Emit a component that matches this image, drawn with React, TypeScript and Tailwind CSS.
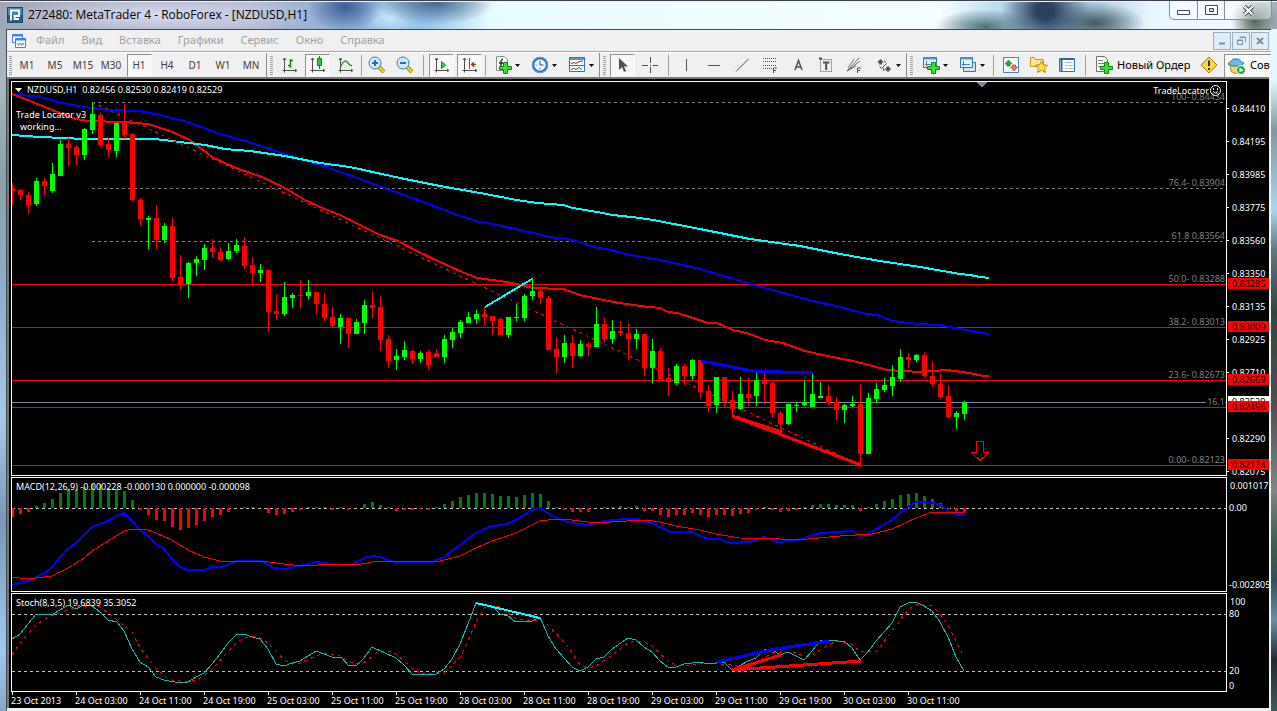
import type { ReactNode } from 'react';
import clsx from 'clsx';

type Candle = [number, number, number, number, number];

// [up, high, body top, body bottom, low]
const candles: Candle[] = [
  [0, 183, 188, 191, 205], [0, 189, 190, 195, 200], [0, 192, 195, 205, 214], [1, 178, 181, 204, 206],
  [0, 178, 181, 186, 195], [1, 163, 174, 191, 193], [1, 140, 144, 176, 176], [0, 138, 144, 148, 166],
  [0, 145, 147, 155, 165], [1, 128, 129, 155, 160], [1, 102, 114, 130, 134], [0, 113, 115, 145, 147],
  [0, 138, 144, 150, 157], [1, 123, 123, 151, 157], [0, 104, 123, 135, 139], [0, 133, 134, 200, 202],
  [0, 198, 200, 219, 226], [1, 216, 218, 220, 249], [0, 205, 218, 240, 249], [1, 223, 226, 240, 243],
  [0, 217, 226, 278, 282], [0, 255, 277, 284, 290], [1, 262, 263, 284, 298], [1, 256, 259, 263, 276],
  [1, 244, 248, 260, 270], [0, 239, 248, 252, 258], [0, 247, 252, 260, 261], [1, 243, 251, 259, 260],
  [1, 239, 245, 251, 253], [0, 237, 246, 266, 269], [0, 257, 265, 273, 284], [1, 264, 270, 273, 282],
  [0, 270, 270, 312, 332], [0, 294, 311, 314, 320], [1, 282, 297, 314, 316], [1, 293, 295, 298, 308],
  [0, 280, 295, 296, 308], [1, 280, 292, 296, 299], [0, 292, 292, 304, 314], [0, 293, 304, 318, 321],
  [0, 307, 317, 326, 327], [1, 314, 318, 327, 344], [0, 318, 318, 334, 348], [1, 319, 322, 334, 334],
  [1, 300, 305, 323, 334], [0, 292, 305, 308, 318], [0, 296, 307, 340, 351], [0, 335, 339, 361, 368],
  [1, 349, 356, 360, 370], [1, 341, 350, 357, 360], [0, 350, 351, 359, 364], [1, 351, 353, 359, 363],
  [0, 350, 352, 365, 370], [0, 349, 353, 357, 357], [1, 335, 339, 357, 363], [1, 328, 332, 340, 348],
  [1, 320, 322, 333, 338], [1, 312, 317, 323, 323], [1, 310, 314, 319, 324], [0, 307, 314, 317, 325],
  [0, 316, 316, 321, 335], [0, 317, 319, 335, 335], [1, 317, 317, 335, 338], [1, 304, 317, 318, 321],
  [1, 294, 296, 318, 321], [1, 278, 291, 296, 300], [0, 288, 291, 298, 304], [0, 296, 298, 350, 350],
  [0, 337, 349, 357, 373], [1, 335, 343, 357, 363], [0, 335, 343, 356, 368], [1, 340, 344, 356, 357],
  [0, 342, 344, 347, 356], [1, 307, 324, 347, 347], [0, 318, 324, 339, 342], [1, 320, 331, 339, 344],
  [0, 321, 331, 333, 336], [0, 323, 333, 339, 360], [1, 329, 334, 339, 349], [0, 334, 334, 368, 376],
  [1, 339, 351, 368, 383], [0, 348, 351, 379, 379], [0, 368, 378, 382, 396], [1, 364, 366, 383, 385],
  [0, 364, 366, 376, 385], [1, 359, 360, 376, 380], [0, 360, 360, 392, 398], [0, 385, 391, 406, 412],
  [1, 377, 377, 405, 413], [0, 377, 377, 401, 407], [0, 391, 400, 409, 415], [1, 377, 394, 409, 410],
  [0, 378, 394, 398, 406], [1, 371, 380, 396, 406], [0, 373, 380, 384, 404], [0, 380, 383, 413, 418],
  [0, 411, 413, 424, 431], [1, 404, 404, 424, 425], [1, 402, 405, 406, 412], [1, 380, 402, 405, 406],
  [1, 372, 394, 407, 407], [1, 382, 396, 398, 398], [0, 385, 396, 403, 405], [0, 397, 402, 410, 420],
  [1, 404, 405, 410, 423], [1, 396, 404, 406, 407], [0, 384, 404, 454, 467], [1, 393, 398, 454, 454],
  [1, 383, 389, 399, 403], [1, 378, 385, 390, 392], [1, 365, 377, 386, 396], [1, 349, 357, 379, 382],
  [0, 353, 357, 360, 368], [1, 354, 355, 360, 362], [0, 352, 355, 376, 378], [0, 361, 376, 384, 387],
  [0, 373, 384, 397, 398], [0, 385, 396, 417, 418], [1, 411, 413, 417, 429], [1, 401, 402, 414, 420],
];

const histogram = [
  -9, -6, -4, 2, 5, 9, 15, 19, 19, 21, 24, 24, 20, 19, 17, 8, -2, -7, -12, -13, -19, -22, -20, -17, -13, -9, -7, -4, 0, 1,
  1, 0, -5, -7, -6, -4, -2, 1, 1, 1, -2, 1, -2, 0, 4, 6, 3, 1, -3, -2, -2, -1, -2, 1, 4, 7, 11, 13, 15, 15,
  14, 12, 12, 11, 13, 15, 14, 7, 1, -2, -4, -4, -4, 0, 1, 1, 2, 1, 2, -3, -3, -7, -9, -7, -7, -5, -7, -9, -7, -7,
  -8, -6, -5, -2, 1, -2, -4, -3, -2, 1, 3, 4, 4, 3, 3, 3, -3, 1, 4, 7, 9, 13, 14, 15, 12, 9, 5, -1, -3, -4,
];

const maSlow =
  '12,135 40,137 64,138 84,139 155,139 172,141 205,145 225,149 250,151 285,156 320,163 350,167 400,178 440,186 480,193 517,200 537,203 563,205 573,208 597,212 613,215 640,218 653,220 700,229 750,239 800,246 840,254 880,261 920,267 960,274 970,275 980,277 989,278';
const maMedium =
  '12,94 40,97 62,103 84,107 108,110 140,111 160,115 188,122 220,134 252,143 285,154 320,165 352,176 384,188 418,200 460,216 480,222 493,224 533,233 550,237 567,239 580,242 597,248 607,249 630,255 660,260 700,269 740,281 780,292 809,300 840,307 867,314 877,315 893,321 917,324 940,325 960,329 989,334';
const maFast =
  '12,94 30,101 52,110 76,119 88,121 124,122 148,124 170,131 190,140 212,157 236,168 262,177 285,188 305,200 320,207 340,215 380,235 398,241 417,251 440,262 462,272 477,278 500,281 517,284 533,288 563,289 580,295 613,302 640,306 660,308 668,312 677,313 687,316 708,323 717,323 733,330 750,334 765,340 783,343 805,351 827,356 853,361 873,366 887,370 920,372 947,370 970,373 983,376 989,376';
const macdMain =
  '12,585 20,583 28,581 36,577 46,572 53,566 60,557 68,549 76,543 84,535 92,527 100,524 108,521 116,516 124,513 132,521 140,530 148,536 156,544 164,549 172,559 180,567 188,570 204,570 212,567 222,567 236,561 262,561 274,568 284,569 300,566 316,562 332,564 350,565 356,562 364,558 372,556 380,557 388,560 395,562 432,562 444,557 460,545 476,533 484,529 492,526 504,525 516,520 532,510 540,508 548,513 556,518 572,523 588,525 604,521 625,519 638,519 645,522 652,523 660,527 668,531 672,532 692,532 708,539 720,539 730,543 750,542 764,537 778,542 798,540 820,533 852,531 860,536 868,534 876,529 892,520 900,513 908,507 916,502 934,503 942,506 948,511 956,515 965,515';
const macdSignal =
  '12,577 28,579 52,576 68,568 84,558 92,551 108,541 124,531 132,529 148,530 156,533 172,540 188,550 204,557 220,561 236,562 262,561 284,564 304,566 332,564 356,565 372,562 380,561 440,561 460,556 476,548 492,541 516,533 540,521 556,519 572,520 588,522 610,522 645,520 660,522 676,526 700,530 716,534 740,538 780,539 808,539 840,536 872,534 892,529 916,518 932,512 965,512';
const stochMain =
  '12,639 20,634 28,624 36,614 53,614 60,610 68,605 76,609 84,605 92,606 100,612 108,620 117,622 124,631 132,649 140,662 148,667 156,677 164,680 180,683 188,682 196,677 204,673 212,664 220,654 228,643 236,635 244,634 252,637 260,639 268,649 276,664 284,666 292,663 300,661 308,656 316,651 324,654 332,657 342,658 348,665 356,666 364,658 372,647 396,658 404,665 412,674 428,675 436,674 444,669 452,659 460,644 468,624 476,603 492,606 500,614 508,616 516,622 532,621 540,617 548,636 556,649 572,667 580,671 588,667 596,659 604,657 612,649 628,638 636,640 644,647 652,652 660,661 668,667 676,667 684,664 700,662 708,664 724,662 732,670 748,661 756,658 764,650 772,649 780,655 788,652 796,656 804,660 812,651 820,641 830,640 845,642 852,648 860,660 868,652 876,641 884,632 892,623 900,607 908,603 916,602 924,606 932,611 940,622 948,637 956,657 964,671';
const stochSignal =
  '12,655 20,643 36,625 48,617 60,613 76,607 92,606 100,607 116,619 132,632 140,648 156,668 164,676 172,680 188,682 196,680 204,676 212,669 228,652 236,643 244,638 252,636 260,638 268,643 276,651 284,660 292,664 300,663 316,656 324,653 340,656 348,661 356,664 366,662 376,653 388,651 396,654 412,668 420,673 436,674 444,673 460,657 468,641 476,622 484,608 492,605 500,607 508,613 516,619 532,621 540,620 548,625 564,642 580,665 588,668 596,666 612,655 628,643 636,641 644,642 652,646 668,661 676,665 690,665 708,663 732,665 748,668 756,663 772,653 796,652 804,657 812,656 820,650 836,641 850,643 860,651 876,652 884,642 900,620 908,610 916,604 932,606 940,614 948,625 956,641 964,657';

const prices: [string, number][] = [
  ['0.84410', 109], ['0.84195', 142], ['0.83985', 175], ['0.83775', 208], ['0.83560', 241], ['0.83350', 274],
  ['0.83135', 307], ['0.82925', 340], ['0.82710', 373], ['0.82290', 439], ['0.82075', 472],
];
const levels: [string, number][] = [
  ['0.83285', 284], ['0.83009', 327], ['0.82669', 380], ['0.82496', 407], ['0.82124', 465],
];
const fibs: [string, number][] = [
  ['100- 0.84434', 97], ['76.4- 0.83904', 183], ['61.8 0.83564', 236], ['50.0- 0.83288', 279],
  ['38.2- 0.83013', 322], ['23.6- 0.82673', 375], ['0.00- 0.82123', 460],
];
const times = [
  '23 Oct 2013', '24 Oct 03:00', '24 Oct 11:00', '24 Oct 19:00', '25 Oct 03:00', '25 Oct 11:00', '25 Oct 19:00',
  '28 Oct 03:00', '28 Oct 11:00', '28 Oct 19:00', '29 Oct 03:00', '29 Oct 11:00', '29 Oct 19:00', '30 Oct 03:00', '30 Oct 11:00',
];
const menu = ['Файл', 'Вид', 'Вставка', 'Графики', 'Сервис', 'Окно', 'Справка'];
const periods = ['M1', 'M5', 'M15', 'M30', 'H1', 'H4', 'D1', 'W1', 'MN'];

function Icon({ children }: { children: ReactNode }) {
  return (
    <svg width="18" height="18" viewBox="0 0 18 18" fill="none" stroke="#505050" className="shrink-0 overflow-visible" aria-hidden="true">
      {children}
    </svg>
  );
}

const pressedBox = 'flex h-[23px] w-[25px] items-center justify-center border border-[#f8f8f8] border-t-[#909090] border-l-[#909090] bg-[#f8f8f8]';

function Tool({ label, pressed, drop, children }: { label: string; pressed?: boolean; drop?: boolean; children: ReactNode }) {
  return (
    <button
      type="button"
      aria-label={label}
      className={clsx('flex h-[23px] shrink-0 items-center', drop ? 'w-[37px] gap-[3px] pl-[7px]' : 'w-7 justify-center')}
    >
      {pressed ? <span className={pressedBox}>{children}</span> : children}
      {drop && (
        <svg width="5" height="3" className="shrink-0" aria-hidden="true">
          <path d="M0 0h5L2.500 3z" fill="#000" />
        </svg>
      )}
    </button>
  );
}

function Sep({ wide }: { wide?: boolean }) {
  return (
    <span className={clsx('flex shrink-0 justify-center', wide ? 'w-2' : 'w-1')}>
      <span className="h-[21px] w-px bg-[#a0a0a0]" />
    </span>
  );
}

function Grip({ first }: { first?: boolean }) {
  return (
    <span className={clsx('flex shrink-0 items-center gap-[3px]', first ? 'w-[6px] pl-[2px]' : 'w-[10px] pl-px')}>
      {!first && <span className="h-[25px] w-px bg-[#8c8c8c]" />}
      <span className="h-[19px] w-[3px] bg-[repeating-linear-gradient(#a0a0a0_0_1px,#f0f0f0_1px_2px)]" />
    </span>
  );
}

const plus = <path d="M9.500 6.500h4v4h4v3h-4v4h-4v-4h-4v-3h4z" fill="#3ae03a" stroke="#0a8a0a" />;
const axes = <path d="M4.500 2.500v14M2.500 14.500h14M3 4l1.500-2L6 4M15 13l2 1.500-2 1.500" />;
const lens = (
  <>
    <path d="m11 11 5 5" stroke="#b08a10" strokeWidth="4" />
    <path d="m11 11 5 5" stroke="#f0d040" strokeWidth="2" />
    <circle cx="7" cy="7" r="6" fill="#cfe8fa" stroke="#3a80b8" />
  </>
);

function Toolbar() {
  return (
    <div
      role="toolbar"
      aria-label="Панель"
      className="flex h-[26px] shrink-0 items-center overflow-hidden border-t border-[#a8a8a8] pt-px text-[10px] shadow-[inset_0_1px_0_#fff]"
    >
      <Grip first />
      {periods.map((p) => (
        <button key={p} type="button" className="flex h-[23px] w-7 shrink-0 items-center justify-center text-[#404040]">
          {p === 'H1' ? <span className={pressedBox}>{p}</span> : p}
        </button>
      ))}
      <Grip />
      <Tool label="Бары">
        <Icon>{axes}<path d="M10.500 3v9M8 9.500h2.500M10.500 4.500H13" stroke="#0a8a0a" strokeWidth="1.500" /></Icon>
      </Tool>
      <Tool label="Свечи" pressed>
        <Icon>{axes}<path d="M11.500 0v13" stroke="#0a7a0a" /><path d="M9.500 2.500h4v7h-4z" fill="#20d040" stroke="#0a8a0a" /></Icon>
      </Tool>
      <Tool label="Линия">
        <Icon>{axes}<path d="M4.500 11C7 5 9.500 4 11 6s3 3.500 5 4" stroke="#2c9a2c" strokeWidth="1.500" /></Icon>
      </Tool>
      <Sep />
      <Tool label="Увеличить">
        <Icon>{lens}<path d="M4 7h6M7 4v6" stroke="#2a70a8" strokeWidth="2" /></Icon>
      </Tool>
      <Tool label="Уменьшить">
        <Icon>{lens}<path d="M4 7h6" stroke="#2a70a8" strokeWidth="2" /></Icon>
      </Tool>
      <Sep wide />
      <Tool label="Автопрокрутка" pressed>
        <Icon>{axes}<path d="m9.500 5.500 4 3.500-4 3.500z" fill="#40d050" stroke="#0a8a0a" /></Icon>
      </Tool>
      <Tool label="Сдвиг графика" pressed>
        <Icon>{axes}<path d="M9.500 2v11" stroke="#2070a8" /><path d="M16 8.500h-3" stroke="#c03000" strokeWidth="1.500" /><path d="M14 5.500l-3.500 3 3.500 3z" fill="#c03000" stroke="none" /></Icon>
      </Tool>
      <Sep />
      <Tool label="Индикаторы" drop>
        <Icon><path d="M2.500.5h8l3 3v11h-11z" fill="#fff" stroke="#909090" /><path d="M9 3.500c-2 0-2 1-2 3v5M5 7h4" stroke="#303030" strokeWidth="1.500" />{plus}</Icon>
      </Tool>
      <Tool label="Периоды" drop>
        <Icon><circle cx="9" cy="9" r="7" fill="#f4f8fc" stroke="#1a68b8" strokeWidth="2.500" /><circle cx="9" cy="9" r="7.500" stroke="#60a8e8" /><path d="M9 4.500V9h3.500M4.500 9h1M9 13v-1" stroke="#404858" /></Icon>
      </Tool>
      <Tool label="Шаблоны" drop>
        <Icon><path d="M1.500 1.500h15v14h-15z" fill="#fff" stroke="#2a78b8" /><path d="M2 3h14" stroke="#4a98d8" strokeWidth="2" /><path d="m3 7.500 3-1 2 1 3-2 4-.5" stroke="#b02010" /><path d="M2 9.500h14" stroke="#2a78b8" /><path d="m3 13.500 3-1 2 1 3-2 3 2" stroke="#108a20" /></Icon>
      </Tool>
      <Grip />
      <Tool label="Курсор" pressed>
        <Icon><path d="M6 2v12l3-3 2 5 2-1-2-4.500h4z" fill="#505050" stroke="none" /></Icon>
      </Tool>
      <Tool label="Перекрестие">
        <Icon><path d="M9.500 1v6M9.500 11v6M1 9.500h6M12 9.500h5M9 9.500h1" /></Icon>
      </Tool>
      <Sep wide />
      <Tool label="Вертикальная линия"><Icon><path d="M9.500 3v12" /></Icon></Tool>
      <Tool label="Горизонтальная линия"><Icon><path d="M3 9.500h12" /></Icon></Tool>
      <Tool label="Трендовая линия"><Icon><path d="M3 15.500 15.500 3" /></Icon></Tool>
      <Tool label="Линии Фибоначчи">
        <Icon><path d="M2 2.500h14M2 5.500h14M2 9.500h14M2 12.500h9" strokeDasharray="1 1" /><path d="M12.500 17v-5H16M12.500 14.500H15" /></Icon>
      </Tool>
      <Tool label="Текст"><Icon><path d="M6 14 9.500 4.500 13 14M7 11h5" strokeWidth="1.500" /></Icon></Tool>
      <Tool label="Метка">
        <Icon><path d="M3.500 3.500h11v12h-11z" strokeDasharray="1 1" /><path d="M6 6.500h6.500M9.200 6.500V14" strokeWidth="2" /><path d="M2 2.500h3" strokeWidth="2" /></Icon>
      </Tool>
      <Tool label="Веер Фибоначчи">
        <Icon><path d="M2 15 14 2M2 15 15 5M2 15l9-5M3 12l6-9" strokeWidth=".8" /><path d="M12.500 17v-5H16M12.500 14.500H15" /></Icon>
      </Tool>
      <Tool label="Стрелки" drop>
        <Icon><path d="m5.500 3 3.500 3.500H7v2H4v-2H2zM13 16l-3.500-3.500h2v-2h3v2h2zM9 4l2 2-1 1zM8 12l2 2-2 1z" fill="#505050" stroke="none" /><path d="m4.500 10.500 2 2 5-5" /></Icon>
      </Tool>
      <Grip />
      <Tool label="Новый график" drop>
        <Icon><path d="M1.500 1.500h13v10h-13z" fill="#e6f2fc" stroke="#2a78b8" /><path d="M2 2.500h12" stroke="#4a98d8" strokeWidth="2" /><path d="M4.500 5v5M3 8.500h8" stroke="#5080a8" />{plus}</Icon>
      </Tool>
      <Tool label="Профили" drop>
        <Icon><path d="M4.500 6.500h12v9h-12z" fill="#d0e4f6" stroke="#2a78b8" /><path d="M1.500 1.500h12v10h-12z" fill="#e6f2fc" stroke="#2a78b8" /><path d="M2 2.500h11" stroke="#4a98d8" strokeWidth="2" /><path d="M4.500 5v5M3 8.500h8" stroke="#5080a8" /></Icon>
      </Tool>
      <Sep wide />
      <Tool label="Обзор рынка">
        <Icon><path d="M1.500 1.500h15v15h-15z" fill="#f4faff" stroke="#3a88c8" /><path d="m6.500 4 3.500 4H8v2H5V8H3z" fill="#20b030" stroke="#108020" strokeWidth=".7" /><path d="m12 15-3.500-4h2V9h3v2h2z" fill="#f08050" stroke="#c03010" strokeWidth=".7" /></Icon>
      </Tool>
      <Tool label="Навигатор">
        <Icon><path d="M.5 1.500h4l1 2h8v7H.5z" fill="#fce88a" stroke="#c09a20" /><path d="m11.500 5 1.800 3.800 4.200.5-3 2.900.8 4.200-3.800-2-3.800 2 .8-4.200-3-2.900 4.200-.5z" fill="#ffe040" stroke="#b08810" /></Icon>
      </Tool>
      <Tool label="Данные">
        <Icon><path d="M1.500 2.500h15v13h-15z" fill="#fff" stroke="#2a78b8" /><path d="M2 3h14M3.500 3v12" stroke="#2a68a8" strokeWidth="2" /><path d="M7 6.500h8M7 9.500h8M7 12.500h8" stroke="#a8c0d8" /></Icon>
      </Tool>
      <Sep wide />
      <button type="button" className="flex h-[23px] w-[106px] shrink-0 items-center gap-1 pl-[6px] text-[11px] whitespace-nowrap text-black">
        <Icon><path d="M1.500.5h8l3 3v12h-11z" fill="#fff" stroke="#707070" /><path d="M3 4.500h5M3 7.500h6M3 10.500h4" stroke="#808080" />{plus}</Icon>
        Новый Ордер
      </button>
      <Tool label="Предупреждение">
        <Icon><path d="m9 1 8 8-8 8-8-8z" fill="#fcd840" stroke="#a88010" /><path d="M9 4.500v5.500M9 12v2" stroke="#303030" strokeWidth="2" /></Icon>
      </Tool>
      <button type="button" className="ml-px flex h-[23px] flex-1 items-center gap-1 border-t border-l border-[#909090] bg-[#f8f8f8] pl-[3px] text-[11px] whitespace-nowrap text-black">
        <Icon><path d="M2 8h12l-1 6c-2 3-8 3-10 0z" fill="#f4d060" stroke="#b89020" /><path d="M0 7c3-2 4-5 6-5h4c2 0 2 3 6 4-2 4-13 4-16 1z" fill="#68b8e8" stroke="#2a78b0" /><circle cx="13" cy="13" r="4.500" fill="#20b030" stroke="#fff" /><path d="m11.500 10.500 4 2.500-4 2.500z" fill="#fff" stroke="none" /></Icon>
        Сов
      </button>
    </div>
  );
}

function TitleBar() {
  return (
    <header className="flex h-[29px] shrink-0 items-start justify-between border-t border-[#3a3f48] [background:radial-gradient(60px_22px_at_435px_2px,#486890_0,transparent_100%),radial-gradient(38px_24px_at_345px_6px,#3a5c94_0,transparent_100%),radial-gradient(30px_18px_at_390px_16px,#c8e8fc_0,transparent_100%),radial-gradient(160px_20px_at_160px_14px,#d8dcf0_0,transparent_100%),radial-gradient(44px_40px_at_1045px_10px,#2c4060_20%,transparent_100%),radial-gradient(50px_18px_at_985px_26px,#507078_0,transparent_100%),radial-gradient(50px_20px_at_1095px_22px,#405860_0,transparent_100%),radial-gradient(24px_24px_at_1255px_20px,#506458_0,transparent_100%),linear-gradient(90deg,#a0a8b8_0,#b0b8d0_250px,#90b0d8_340px,#98c8ec_430px,#e8fcff_490px,#f6feff_940px,#b8dcf0_1000px,#a8c8e0_1090px,#e8f6ff_1150px,#f0faff_1240px,#a0b0b8_100%)] pl-[7px] shadow-[inset_0_1px_0_#e8f4fa]">
      <div className="flex h-7 items-center gap-[5px]">
        <svg width="16" height="16" viewBox="0 0 16 16" aria-hidden="true">
          <path d="M0 0h16v16H0z" fill="#174a68" />
          <path d="M1 1h14v7H1z" fill="#4a88a8" />
          <path d="M1 8h14v7H1z" fill="#246080" />
          <path d="M4 13.500V3.500h8v5.500H7.500v3H12" fill="none" stroke="#fff" strokeWidth="1.800" />
        </svg>
        <h1 className="font-['Open_Sans',sans-serif] text-[12px] text-black">272480: MetaTrader 4 - RoboForex - [NZDUSD,H1]</h1>
      </div>
      <div className="mr-[5px] flex h-[19px] overflow-hidden rounded-b-[5px] border border-t-0 border-[#8090a0] bg-white/40">
        <button type="button" aria-label="Свернуть" className="flex w-7 items-center justify-center border-r border-[#8090a0]">
          <svg width="13" height="12"><path d="M.5 6.500h12v4H.5z" fill="#fff" stroke="#404858" /></svg>
        </button>
        <button type="button" aria-label="Развернуть" className="flex w-[27px] items-center justify-center border-r border-[#8090a0]">
          <svg width="13" height="11"><path d="M.5.5h12v9H.5z" fill="#fff" stroke="#404858" /><path d="M4.500 3.500h4v3h-4z" fill="#d0dce8" stroke="#404858" /></svg>
        </button>
        <button type="button" aria-label="Закрыть" className="flex w-[46px] items-center justify-center">
          <svg width="13" height="11"><path d="m2.500 1.500 8 8M10.500 1.500l-8 8" stroke="#404858" strokeWidth="4" /><path d="m2.500 1.500 8 8M10.500 1.500l-8 8" stroke="#fff" strokeWidth="2" /></svg>
        </button>
      </div>
    </header>
  );
}

const mdiButton = 'flex h-[18px] w-[18px] items-center justify-center border border-[#9ab0c4] bg-[#e0ecf6]';

function MenuBar() {
  return (
    <nav className="flex h-[21px] shrink-0 items-center pr-[2px] pl-[4px]">
      <svg width="16" height="16" viewBox="0 0 16 16" fill="#fff" stroke="#4a80d8" aria-hidden="true">
        <path d="M1.500 1.500h10v8h-10z" />
        <path d="M1 2.500h11" strokeWidth="2" />
        <path d="M4.500 5.500h10v9h-10z" />
        <path d="M4 6.500h11" strokeWidth="2" />
        <path d="m6 10 1.500 2.500L9 10l1.500 2.500L12 10l1 2" fill="none" />
      </svg>
      <div className="flex flex-1 gap-[17px] pl-[9px] text-[11px] text-[#a0a0a0]">
        {menu.map((m) => (
          <button key={m} type="button">{m}</button>
        ))}
      </div>
      <div className="flex gap-px">
        <button type="button" aria-label="Свернуть окно" className={mdiButton}>
          <svg width="8" height="8"><path d="M1 6.500h6" stroke="#8090a0" strokeWidth="2" /></svg>
        </button>
        <button type="button" aria-label="Восстановить окно" className={mdiButton}>
          <svg width="9" height="9" fill="none" stroke="#8090a0"><path d="M3 1.500h5.500V6M2.500 1h6M.5 4.500h5v4h-5zM0 4h6" /></svg>
        </button>
        <button type="button" aria-label="Закрыть окно" className={mdiButton}>
          <svg width="8" height="8"><path d="m1 1 6 6M7 1 1 7" stroke="#8090a0" strokeWidth="2" /></svg>
        </button>
      </div>
    </nav>
  );
}

function Label({ y, className, children }: { y: number; className: string; children: ReactNode }) {
  return (
    <span className={clsx('absolute h-[11px] leading-[11px] whitespace-nowrap', className)} style={{ top: y - 6 }}>
      {children}
    </span>
  );
}

function Level({ y, color, dashed }: { y: number; color: string; dashed?: boolean }) {
  return <line x1="0" x2="100%" y1={y + 0.5} y2={y + 0.5} stroke={color} strokeDasharray={dashed ? '3 3' : undefined} />;
}

function PriceChart() {
  return (
    <section className="grid min-h-[395px] flex-1 grid-cols-[1fr_42px]">
      <div className="relative overflow-hidden border border-white">
        <svg className="absolute inset-0 h-full w-full" shapeRendering="crispEdges" fill="none" aria-hidden="true">
          {[20, 106, 159].map((y) => (
            <line key={y} x1="80" x2="100%" y1={y + 0.5} y2={y + 0.5} stroke="#808080" strokeDasharray="3 3" />
          ))}
          <Level y={320} color="#778899" />
          {levels.map(([p, y]) => (
            <Level key={p} y={y - 82} color="#ff0000" />
          ))}
          <g transform="translate(-12 -82)">
            <path d="M976 82h11l-5.500 5.500z" fill="#778899" />
            <polyline points={maMedium} stroke="#0000ff" strokeWidth="2" />
            <polyline points={maFast} stroke="#ff0000" strokeWidth="2" />
            <polyline points={maSlow} stroke="#00ffff" strokeWidth="2" />
            <path d="M92 102 860 465" stroke="#ff0000" strokeDasharray="3 4" />
            {candles.map(([up, high, top, bottom, low], i) => (
              <g key={i} fill={up ? '#00ff00' : '#ff0000'}>
                <rect x={12 + i * 8} y={high} width="1" height={low - high} />
                <rect x={10 + i * 8} y={top} width="5" height={bottom - top} />
              </g>
            ))}
            <path d="M485 307 532 279" stroke="#00ffff" strokeWidth="2" />
            <path d="M701 361 753 371 813 373" stroke="#0000ff" strokeWidth="3" />
            <path d="M782 432 732 416 861 465" stroke="#ff0000" strokeWidth="3" />
            <path d="M976.500 441.500h7v11h5l-8.500 8-8.500-8h5z" stroke="#ff0000" />
          </g>
        </svg>
        <p className="absolute top-[2px] left-[3px] flex items-center gap-[5px] leading-[11px]">
          <svg width="7" height="4" aria-hidden="true"><path d="M0 0h7L3.500 4z" fill="#fff" /></svg>
          <span className="whitespace-pre">NZDUSD,H1  0.82456 0.82530 0.82419 0.82529</span>
        </p>
        <p className="absolute top-[27px] left-1 leading-3">
          Trade Locator v3
          <br />
          <span className="ml-1">working...</span>
        </p>
        {fibs.map(([t, y]) => (
          <Label key={t} y={y - 82} className="right-px text-[#808080]">{t}</Label>
        ))}
        <Label y={320} className="right-px bg-black pl-px text-[#808080]">16.1</Label>
        <p className="absolute top-[3px] right-[5px] flex items-center gap-px leading-[11px]">
          TradeLocator
          <svg width="11" height="11" fill="none" stroke="#fff" aria-hidden="true">
            <circle cx="5.500" cy="5.500" r="5" />
            <path d="M3 6.500q2.500 3 5 0M3.500 3v2M7.500 3v2" />
          </svg>
        </p>
      </div>
      <div className="relative overflow-hidden">
        {prices.map(([p, y]) => (
          <Label key={p} y={y - 81} className="left-0 flex items-center gap-[3px]">
            <span className="h-px w-[2px] bg-white" />
            {p}
          </Label>
        ))}
        <Label y={321} className="left-px w-full bg-white pl-1 text-black">0.82529</Label>
        {levels.map(([p, y]) => (
          <Label key={p} y={y - 81} className="left-px w-full bg-[#ff0000] pl-1 text-black">{p}</Label>
        ))}
      </div>
    </section>
  );
}

function MacdChart() {
  return (
    <section className="grid h-[115px] shrink-0 grid-cols-[1fr_42px]">
      <div className="relative overflow-hidden border border-white">
        <svg className="absolute inset-0 h-full w-full" shapeRendering="crispEdges" fill="none" aria-hidden="true">
          <Level y={30} color="#c0c0c0" dashed />
          <g transform="translate(-12 -478)">
            {histogram.map((h, i) => (
              <rect key={i} x={11 + i * 8} y={h > 0 ? 508 - h : 508} width="3" height={Math.abs(h)} fill={h > 0 ? '#008000' : '#ff0000'} />
            ))}
            <polyline points={macdMain} stroke="#0000ff" strokeWidth="2" />
            <polyline points={macdSignal} stroke="#ff0000" />
          </g>
        </svg>
        <p className="absolute top-[3px] left-1 leading-[11px]">MACD(12,26,9) -0.000228 -0.000130 0.000000 -0.000098</p>
      </div>
      <div className="relative overflow-hidden">
        <Label y={9} className="left-[3px]">0.001017</Label>
        <Label y={31} className="left-[2px]">0.00</Label>
        <Label y={108} className="left-[2px]">-0.002805</Label>
      </div>
    </section>
  );
}

function StochChart() {
  return (
    <section className="grid h-[99px] shrink-0 grid-cols-[1fr_42px]">
      <div className="relative overflow-hidden border border-white">
        <svg className="absolute inset-0 h-full w-full" shapeRendering="crispEdges" fill="none" aria-hidden="true">
          <Level y={20} color="#c0c0c0" dashed />
          <Level y={77} color="#c0c0c0" dashed />
          <g transform="translate(-12 -594)">
            <polyline points={stochSignal} stroke="#ff0000" strokeDasharray="3 4" />
            <polyline points={stochMain} stroke="#20b2aa" />
            <path d="M476 603 540 618" stroke="#00ffff" strokeWidth="2" />
            <path d="M717 662 775 649 829 641" stroke="#0000ff" strokeWidth="3" />
            <path d="M781 655 732 670 861 661" stroke="#ff0000" strokeWidth="3" />
          </g>
        </svg>
        <p className="absolute top-[3px] left-1 leading-[11px]">Stoch(8,3,5) 19.6839 35.3052</p>
      </div>
      <div className="relative overflow-hidden">
        <Label y={9} className="left-[3px]">100</Label>
        <Label y={21} className="left-[2px]">80</Label>
        <Label y={78} className="left-[2px]">20</Label>
        <Label y={93} className="left-[2px]">0</Label>
      </div>
    </section>
  );
}

export default function App() {
  return (
    <div className="flex min-h-screen flex-col font-['Noto_Sans',sans-serif] [background:linear-gradient(#a0a8b8_0,#a8b8c0_80px,#88a0a8_180px,#90b0d0_300px,#a8c8e8_420px,#7898b8_520px,#a0c8f0_650px,#88a8c8_100%)_left/50%_100%_no-repeat,linear-gradient(#e8f8ff_0,#e0f8ff_80px,#8098a0_130px,#a8d8f0_210px,#607880_250px,#304840_310px,#485048_400px,#808488_490px,#406050_540px,#305058_580px,#6890a8_620px,#202c30_660px,#405860_100%)_right/50%_100%_no-repeat]">
      <TitleBar />
      <main className="mr-[6px] ml-[6px] flex flex-1 flex-col border-t border-l border-[#404c54] bg-[#f0f0f0]">
        <MenuBar />
        <Toolbar />
        <div className="mr-[2px] mb-[3px] flex flex-1 flex-col gap-px border-t-2 border-l-2 border-[#787878] bg-black pt-[2px] pl-[2px] text-[9px] text-white">
          <PriceChart />
          <MacdChart />
          <StochChart />
          <div className="-mt-px flex h-4 overflow-hidden">
            {times.map((t) => (
              <span key={t} className="w-16 shrink-0 whitespace-nowrap">
                <span className="ml-px block h-[3px] w-px bg-white" />
                <span className="block leading-[11px]">{t}</span>
              </span>
            ))}
          </div>
        </div>
      </main>
    </div>
  );
}
